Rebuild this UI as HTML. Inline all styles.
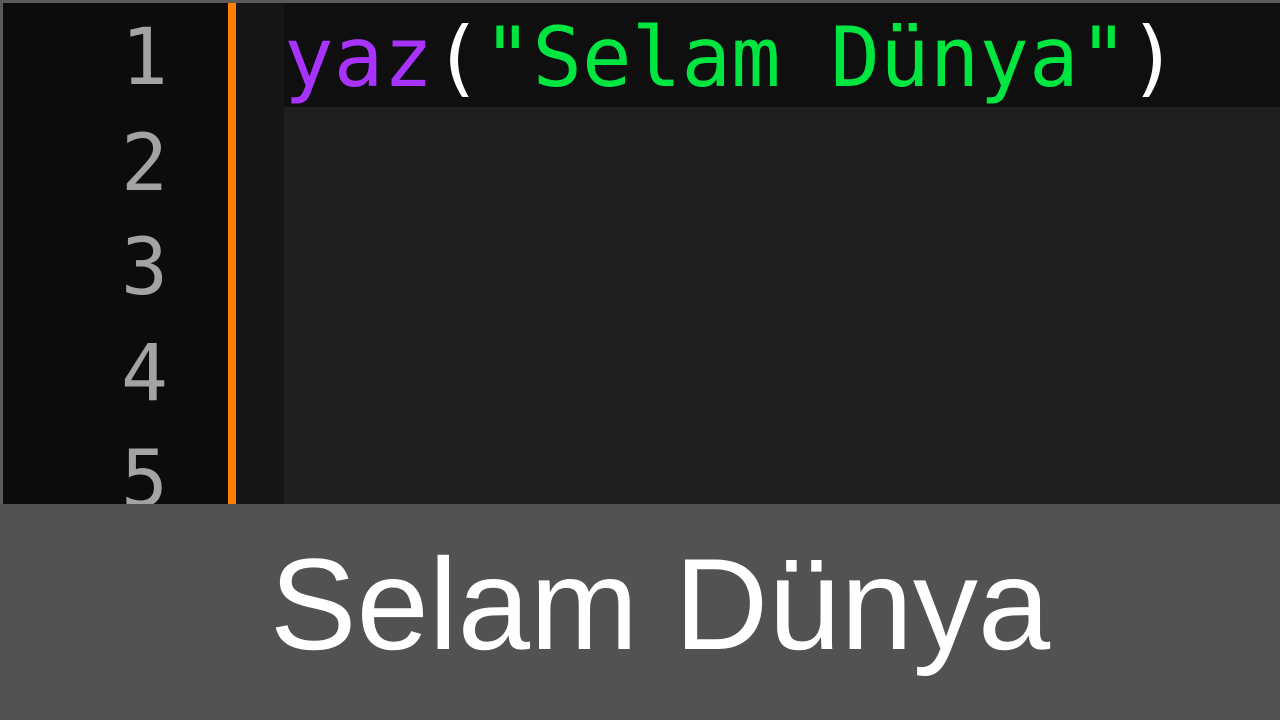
<!DOCTYPE html>
<html><head><style>
html,body{margin:0;width:1280px;height:720px;overflow:hidden}
body{background:#5a5a5a;position:relative;font-family:"Liberation Mono",monospace}
div{position:absolute}
.g{left:3px;top:3px;width:225px;height:501px;background:#0c0c0c}
.o{left:228px;top:3px;width:8px;height:501px;background:#ff8000}
.m{left:236px;top:3px;width:48px;height:501px;background:#161616}
.e{left:284px;top:3px;width:996px;height:501px;background:#1f1f1f}
.h{left:284px;top:3px;width:996px;height:104px;background:#0f0f0f}
.n{left:60px;width:108px;text-align:right;color:#a3a3a3;font-size:78px;line-height:104px;font-family:"DejaVu Sans Mono","Liberation Mono",monospace}
.c{left:284px;top:6px;line-height:104px;font-size:82.5px;white-space:pre;color:#00e640;font-family:"DejaVu Sans Mono","Liberation Mono",monospace}
.b{left:20px;top:504px;width:1280px;height:216px;color:#fff;font-family:"Liberation Sans",sans-serif;font-size:130px;text-align:center;line-height:200px}
.bb{left:0;top:504px;width:1280px;height:216px;background:#525252}
</style></head><body>
<div class="g"></div><div class="o"></div><div class="m"></div><div class="e"></div><div class="h"></div>
<div class="n" style="top:6px">1</div>
<div class="n" style="top:112px">2</div>
<div class="n" style="top:216px">3</div>
<div class="n" style="top:322px">4</div>
<div class="n" style="top:428px">5</div>
<div class="c"><span style="color:#a833ff">yaz</span><span style="color:#fff">(</span>"Selam Dünya"<span style="color:#fff">)</span></div>
<div class="bb"></div>
<div class="b">Selam Dünya</div>
</body></html>
